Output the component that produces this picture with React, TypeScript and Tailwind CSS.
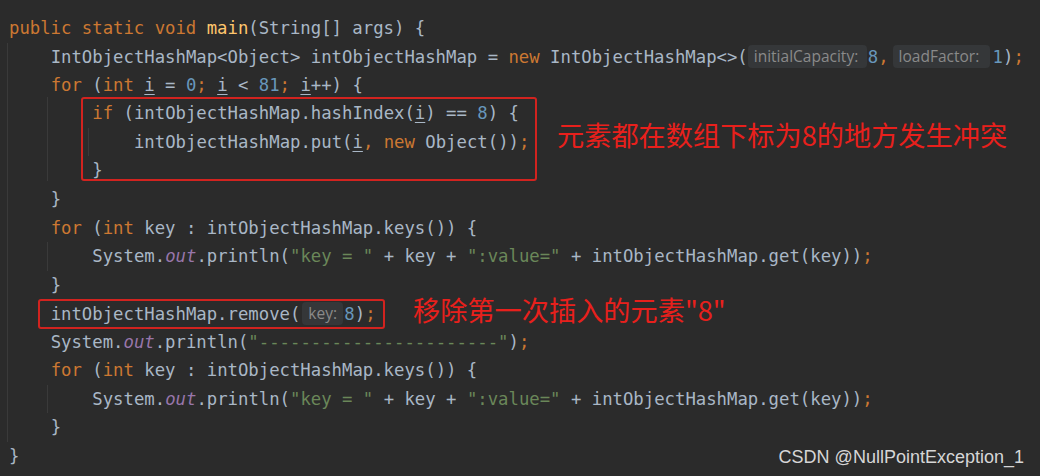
import type { ReactNode } from 'react';

const K = ({ children }: { children: ReactNode }) => <span className="text-[#cc7832]">{children}</span>;
const N = ({ children }: { children: ReactNode }) => <span className="text-[#6897bb]">{children}</span>;
const S = ({ children }: { children: ReactNode }) => <span className="text-[#6a8759]">{children}</span>;
const U = ({ children }: { children: ReactNode }) => <span className="underline underline-offset-[3px] decoration-1">{children}</span>;
const Out = () => <span className="italic text-[#9876aa]">out</span>;

function Hint({ label, w }: { label: string; w: string }) {
  return (
    <span
      className={`inline-block align-middle h-[23px] leading-[23px] rounded-[4px] bg-[#353739] text-[#8a8a8a] pl-[6px] text-[15.5px] font-['Open_Sans',sans-serif] not-italic -mt-[3px] mr-[1px] ${w}`}
    >
      {label}
    </span>
  );
}

function Line({ children }: { children?: ReactNode }) {
  return <div className="h-[28.5px] leading-[28.5px] whitespace-pre">{children}</div>;
}

function Block({ children }: { children: ReactNode }) {
  return <div className="-ml-[4px] border-l border-[#3a3a3a] pl-[44.66px]">{children}</div>;
}

function Note({ children }: { children: ReactNode }) {
  return (
    <span className="whitespace-pre leading-none text-[27.2px] text-[#e8201c] font-['Noto_Sans_CJK_SC',sans-serif]">
      {children}
    </span>
  );
}

function PrintLoop() {
  return (
    <>
      <Line>
        <K>for</K> (<K>int</K> key : intObjectHashMap.keys()) {'{'}
      </Line>
      <Block>
        <Line>
          System.<Out />.println(<S>"key = "</S> + key + <S>":value="</S> + intObjectHashMap.get(key))<K>;</K>
        </Line>
      </Block>
      <Line>{'}'}</Line>
    </>
  );
}

export default function App() {
  return (
    <div className="relative w-[1040px] h-[476px] overflow-hidden bg-[#2b2b2b] pt-[14px] text-[#a9b7c6] text-[17.3px] font-['DejaVu_Sans_Mono',monospace]">
      <div className="pl-[9px]">
        <Line>
          <K>public static void</K> <span className="text-[#ffc66d]">main</span>(String[] args) {'{'}
        </Line>
      </div>
      <div className="ml-[7px] border-l border-[#3a3a3a] pl-[42.66px]">
        <Line>
          IntObjectHashMap&lt;Object&gt; intObjectHashMap = <K>new</K> IntObjectHashMap&lt;&gt;(
          <Hint label="initialCapacity:" w="w-[119px]" />
          <N>8</N>
          <K>,</K>
          <span className="ml-[4px]" />
          <Hint label="loadFactor:" w="w-[97px]" />
          <span className="ml-[2px]" />
          <N>1</N>)<K>;</K>
        </Line>
        <Line>
          <K>for</K> (<K>int</K> <U>i</U> = <N>0</N>
          <K>;</K> <U>i</U> &lt; <N>81</N>
          <K>;</K> <U>i</U>++) {'{'}
        </Line>
        <Block>
          <div className="flex items-center h-[84px] -ml-[11.3px] -mt-[2.5px] mb-[4px]">
            <div className="w-[456px] h-[84px] shrink-0 border-2 border-[#d2231f] rounded-[3px] pl-[9.3px]">
              <Line>
                <K>if</K> (intObjectHashMap.hashIndex(<U>i</U>) == <N>8</N>) {'{'}
              </Line>
              <Block>
                <Line>
                  intObjectHashMap.put(<U>i</U>
                  <K>,</K> <K>new</K> Object())<K>;</K>
                </Line>
              </Block>
              <Line>{'}'}</Line>
            </div>
            <div className="ml-[20px] -mt-[4px]">
              <Note>元素都在数组下标为8的地方发生冲突</Note>
            </div>
          </div>
        </Block>
        <Line>{'}'}</Line>
        <PrintLoop />
        <div className="flex items-center h-[30px] -ml-[12.66px] mb-[-1.5px]">
          <div className="w-[347px] h-[30px] shrink-0 border-2 border-[#d2231f] rounded-[3px] pl-[10.66px]">
            <div className="h-[26px] leading-[26px] whitespace-pre">
              intObjectHashMap.remove(
              <span className="ml-[2px]" />
              <Hint label="key:" w="w-[41px]" />
              <N>8</N>)<K>;</K>
            </div>
          </div>
          <div className="ml-[28px] -mt-[3px]">
            <Note>移除第一次插入的元素"8"</Note>
          </div>
        </div>
        <Line>
          System.<Out />.println(<S>"-----------------------"</S>)<K>;</K>
        </Line>
        <PrintLoop />
      </div>
      <div className="pl-[9px]">
        <Line>{'}'}</Line>
      </div>
      <div className="absolute right-[16px] bottom-[7px] text-[18px] leading-[24px] text-[#d6d6d6] font-['Liberation_Sans',Arial,sans-serif]">
        CSDN @NullPointException_1
      </div>
    </div>
  );
}
